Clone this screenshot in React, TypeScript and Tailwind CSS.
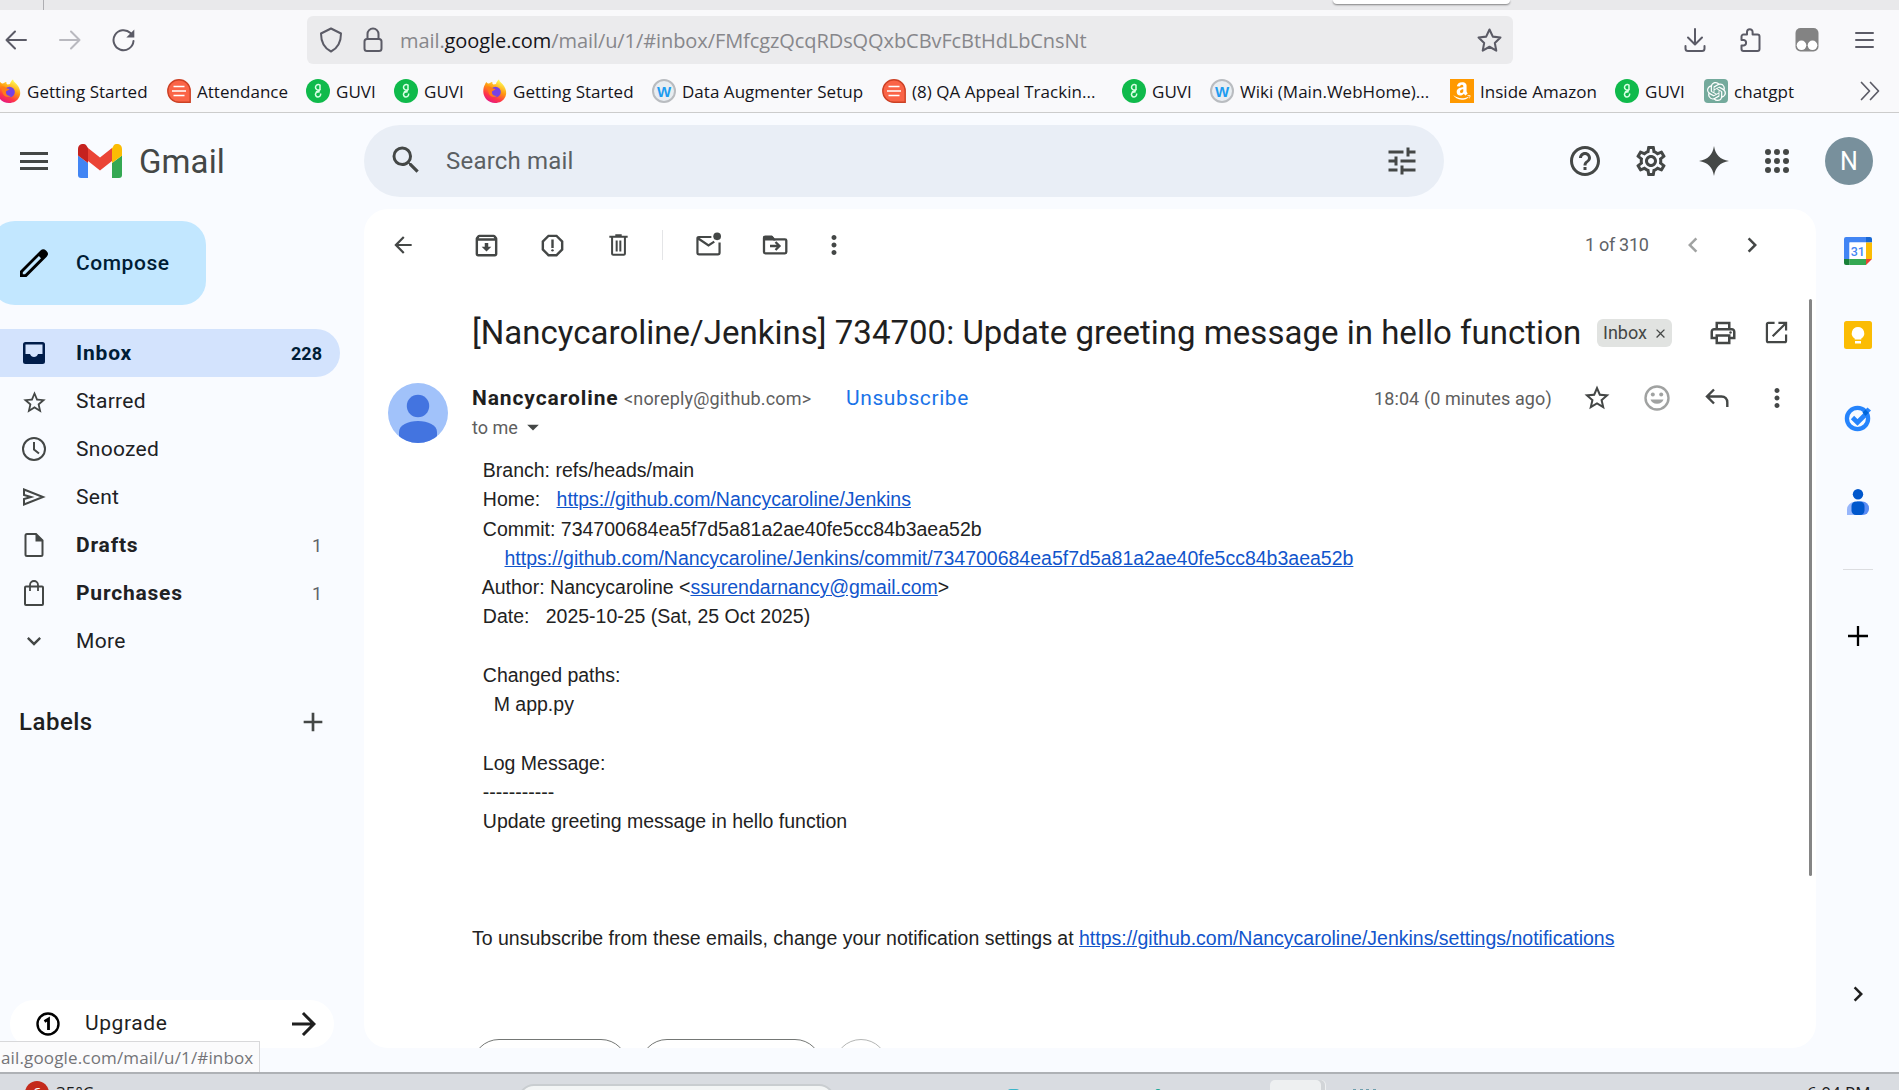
import React from "react";
import {
  MdArrowBack, MdArrowDropDown, MdArrowForward, MdChevronLeft, MdChevronRight, MdExpandMore,
  MdHelpOutline, MdMoreVert, MdOutlineArchive, MdOutlinePrint, MdOutlineSettings, MdSearch, MdStarOutline, MdTune,
  MdOutlineReport, MdAdd, MdClose,
} from "react-icons/md";
import { SiOpenai } from "react-icons/si";
import { FaAmazon } from "react-icons/fa";

const UI = "font-['Open_Sans','Noto_Sans',sans-serif]";

function Firefox() {
  return (
    <svg viewBox="0 0 24 24" className="size-6 shrink-0">
      <defs>
        <linearGradient id="fx" x1="0.8" y1="0" x2="0.3" y2="1">
          <stop offset="0.1" stopColor="#fff44f" />
          <stop offset="0.45" stopColor="#ff980e" />
          <stop offset="0.75" stopColor="#ff3647" />
          <stop offset="1" stopColor="#e31587" />
        </linearGradient>
      </defs>
      <path d="M2 5.500 C2.500 4 3.200 3.200 3.500 3 C4 4 5 4.500 6 4.600 C7 3.500 8.500 3 9.500 3 C9 4 9.500 5 10.500 5.500 L13 5 C13.500 3 14.500 1.500 16 0.500 C16.500 3 19 4 21 7 C23 10 24 14 22.500 17.500 C20.500 22 16.500 24 12 24 C5.500 24 0.500 19 0.300 12.800 C0.200 10 0.800 7.500 2 5.500Z" fill="url(#fx)" />
      <circle cx="12.500" cy="13" r="5.300" fill="#7542e5" />
      <path d="M4 8 C6 7 8 8 10 9.500 L12.500 10 C11.500 11.500 9.500 11.500 9 12.500 C8.500 15.500 11 17.500 14 16.800 C12 19 7.500 18 6 15Z" fill="#ff7a1a" />
    </svg>
  );
}

function RedDoc() {
  return (
    <svg viewBox="0 0 24 24" className="size-6 shrink-0">
      <path d="M12 .8A11.200 11.200 0 1 0 12 23.200H23.200V12A11.200 11.200 0 0 0 12 .8Z" fill="#fa6447" stroke="#cc4125" strokeWidth="1.400" />
      <path d="M6.500 7.500h11M5 12h14M6.500 16.500h11" stroke="#fff" strokeWidth="1.500" />
    </svg>
  );
}

function Guvi() {
  return (
    <svg viewBox="0 0 24 24" className="size-6 shrink-0">
      <circle cx="12" cy="12" r="12" fill="#0fba4b" />
      <path d="M14.500 6.500A2.800 2.800 0 1 0 14.500 10M14 6v4.500c0 2-4 1-4 3.500M14.500 14.500A2.600 2.600 0 1 1 9.700 14.300c.8-1.600 3-1 4-1.800" fill="none" stroke="#d8ffe4" strokeWidth="1.500" />
    </svg>
  );
}

function Wiki() {
  return (
    <span className="flex size-6 shrink-0 items-center justify-center rounded-full border-2 border-[#b9bcc0] bg-[#e8edf1] font-['Liberation_Sans',sans-serif] text-[15px] leading-none font-bold tracking-normal text-[#1c9cf0]">W</span>
  );
}

function Amazon() {
  return (
    <span className="flex size-6 shrink-0 items-center justify-center bg-[#ff9900]"><FaAmazon className="size-5 text-white" /></span>
  );
}

function ChatGpt() {
  return (
    <span className="flex size-6 shrink-0 items-center justify-center rounded-[4px] bg-[#74aa9c]"><SiOpenai className="size-[19px] text-white" /></span>
  );
}

const bookmarks: { icon: React.ReactNode; label: string; w: string }[] = [
  { icon: <Firefox />, label: "Getting Started", w: "w-[170px]" },
  { icon: <RedDoc />, label: "Attendance", w: "w-[139px]" },
  { icon: <Guvi />, label: "GUVI", w: "w-[88px]" },
  { icon: <Guvi />, label: "GUVI", w: "w-[89px]" },
  { icon: <Firefox />, label: "Getting Started", w: "w-[169px]" },
  { icon: <Wiki />, label: "Data Augmenter Setup", w: "w-[230px]" },
  { icon: <RedDoc />, label: "(8) QA Appeal Trackin...", w: "w-[240px]" },
  { icon: <Guvi />, label: "GUVI", w: "w-[88px]" },
  { icon: <Wiki />, label: "Wiki (Main.WebHome)...", w: "w-[240px]" },
  { icon: <Amazon />, label: "Inside Amazon", w: "w-[165px]" },
  { icon: <Guvi />, label: "GUVI", w: "w-[89px]" },
  { icon: <ChatGpt />, label: "chatgpt", w: "w-[156px]" },
];

function BrowserChrome() {
  const s = { fill: "none", stroke: "#5b5b66", strokeWidth: 2, strokeLinecap: "round", strokeLinejoin: "round" } as const;
  return (
    <header className={`${UI} h-[113px] shrink-0 border-b border-[#cccccc] bg-[#f9f9fb]`}>
      <div className="flex h-[10px] bg-[#e9e9eb]">
        <div className="w-[44px] border-r border-[#aeaeb2]" />
        <div className="ml-[1289px] h-[4px] w-[177px] rounded-b-[4px] bg-white shadow-[0_1px_2px_rgba(0,0,0,0.45)]" />
      </div>
      <div className="flex h-[60px] items-center">
        <svg viewBox="0 0 22 22" className="ml-[5px] size-[22px]"><path {...s} d="M21 11H1.500M10 2.500 1.500 11l8.500 8.500" /></svg>
        <svg viewBox="0 0 22 22" className="ml-[32px] size-[22px] opacity-40"><path {...s} d="M1 11h19.500M12 2.500l8.500 8.500-8.500 8.500" /></svg>
        <svg viewBox="0 0 24 24" className="ml-[31px] size-[24px]">
          <path {...s} d="M18.500 5A10 10 0 1 0 21.500 13" />
          <path d="M22.300 1.500v8h-8z" fill="#5b5b66" />
        </svg>
        <div className="ml-[171px] flex h-[48px] w-[1206px] items-center rounded-[6px] bg-[#ebebed]">
          <svg viewBox="0 0 24 26" className="ml-[12px] h-[26px] w-[24px]"><path {...s} d="M12 1.500 22 6.500C22 14 20 20.500 12 24.500 4 20.500 2 14 2 6.500Z" /></svg>
          <svg viewBox="0 0 20 26" className="ml-[20px] h-[26px] w-[20px]"><rect {...s} x="1.500" y="12" width="17" height="12" rx="2.500" /><path {...s} d="M4.500 12V7a5.500 5.500 0 0 1 11 0v5" /></svg>
          <div className="mt-[2px] ml-[17px] w-[1077px] shrink-0 text-[20px] tracking-[-0.08px] whitespace-nowrap text-[#87878b]">
            mail.<span className="text-[#15141a]">google.com</span>/mail/u/1/#inbox/FMfcgzQcqRDsQQxbCBvFcBtHdLbCnsNt
          </div>
          <svg viewBox="0 0 24 24" className="size-[25px] shrink-0"><path {...s} d="m12 1.500 3.200 6.800 7.300.9-5.400 5.100 1.400 7.400L12 18l-6.500 3.700 1.400-7.400L1.500 9.200l7.300-.9Z" /></svg>
        </div>
        <svg viewBox="0 0 22 24" className="ml-[171px] h-[24px] w-[22px]"><path {...s} d="M11 1v15M4 9.500l7 7 7-7M1.500 18v2.500A2.500 2.500 0 0 0 4 23h14a2.500 2.500 0 0 0 2.500-2.500V18" /></svg>
        <svg viewBox="0 0 22 24" className="ml-[33px] h-[24px] w-[22px]"><path {...s} d="M2.500 12V8.500A2 2 0 0 1 4.500 6.500H8V4a2.800 2.800 0 0 1 5.600 0v2.500h4.900a2 2 0 0 1 2 2V21a2 2 0 0 1-2 2h-14a2 2 0 0 1-2-2v-3.500h2.300a2.800 2.800 0 0 0 0-5.500Z" /></svg>
        <svg viewBox="0 0 24 24" className="ml-[34px] size-[24px]"><rect x=".5" y="0" width="23" height="23.500" rx="5" fill="#838383" /><circle cx="6.500" cy="17.300" r="4.800" fill="#fff" /><circle cx="17.500" cy="17.300" r="4.800" fill="#fff" /></svg>
        <svg viewBox="0 0 20 18" className="ml-[35px] h-[18px] w-[20px]"><path {...s} d="M2 2h17M2 9h17M2 16h17" /></svg>
      </div>
      <div className="flex h-[42px] items-center text-[17px] text-[#15141a]">
        <div className="ml-[-3px] flex shrink-0">
          {bookmarks.map((b, i) => (
            <div key={i} className={`flex shrink-0 items-center gap-[6px] whitespace-nowrap tracking-[0.03px] ${b.w}`}>
              {b.icon}
              <span className="pt-[2px]">{b.label}</span>
            </div>
          ))}
        </div>
        <svg viewBox="0 0 20 20" className="h-[20px] w-[20px]"><path {...s} strokeWidth={1.700} d="M1.500 1.500 9.500 10l-8 8.500M10.500 1.500l8 8.500-8 8.500" /></svg>
      </div>
    </header>
  );
}

function GmailLogo() {
  return (
    <svg viewBox="0 0 44 34" className="h-[34px] w-[44px]">
      <path d="M0 11.500 10 19v15H3a3 3 0 0 1-3-3Z" fill="#4285f4" />
      <path d="M44 11.500 34 19v15h7a3 3 0 0 0 3-3Z" fill="#34a853" />
      <path d="M34 4.500V16.500l10-5V5c0-4.500-4.800-6.500-8-4Z" fill="#fbbc04" />
      <path d="M34 4V19l10-7.500V5Z" fill="#fbbc04" />
      <path d="M10 17V4L22 13.500 34 4v13L22 26.500Z" fill="#ea4335" />
      <path d="M0 5v6.500L10 19V4L8 1C4.800-1.500 0 .5 0 5Z" fill="#c5221f" />
    </svg>
  );
}

function AppsGrid() {
  return (
    <svg viewBox="0 0 24 24" className="ml-[33px] size-[24px]">
      {[3, 12, 21].map((y) => [3, 12, 21].map((x) => <circle key={`${x}-${y}`} cx={x} cy={y} r="3" fill="#444746" />))}
    </svg>
  );
}

function Header() {
  return (
    <div className="flex h-[96px] shrink-0 items-center text-[#444746]">
      <div className="ml-[20px] flex h-[20px] w-[28px] flex-col justify-between py-[1px]">
        <i className="h-[3px] bg-[#444746]" /><i className="h-[3px] bg-[#444746]" /><i className="h-[3px] bg-[#444746]" />
      </div>
      <div className="ml-[30px]"><GmailLogo /></div>
      <div className="ml-[17px] w-[225px] pt-[2px] text-[33px] tracking-[0.1px]">Gmail</div>
      <div className="flex h-[72px] w-[1080px] items-center rounded-full bg-[#e9eef6]">
        <MdSearch className="mt-[-2px] ml-[24px] size-[36px]" />
        <div className="ml-[22px] w-[938px] text-[24px] tracking-[0.2px] text-[#5b5f63]">Search mail</div>
        <MdTune className="size-[36px]" />
      </div>
      <MdHelpOutline className="ml-[123px] size-[36px]" />
      <MdOutlineSettings className="ml-[30px] size-[36px]" />
      <svg viewBox="0 0 30 30" className="ml-[30px] size-[30px]"><path d="M15 0C16.500 9 21 13.500 30 15 21 16.500 16.500 21 15 30 13.500 21 9 16.500 0 15 9 13.500 13.500 9 15 0Z" fill="#444746" /></svg>
      <div className="ml-[3px]"><AppsGrid /></div>
      <div className="ml-[36px] flex size-[48px] items-center justify-center rounded-full bg-[#78909c] pt-[1px] text-[25px] text-white">N</div>
    </div>
  );
}

const g = { fill: "none", stroke: "#444746", strokeWidth: 2 } as const;

const nav: { label: string; icon: React.ReactNode; count?: string; bold?: boolean; active?: boolean }[] = [
  { label: "Inbox", count: "228", bold: true, active: true, icon: <svg viewBox="0 0 24 24" className="size-6"><path fillRule="evenodd" fill="#001d4a" d="M3.500 1h17A2.500 2.500 0 0 1 23 3.500v17a2.500 2.500 0 0 1-2.500 2.500h-17A2.500 2.500 0 0 1 1 20.500v-17A2.500 2.500 0 0 1 3.500 1Zm0 2.500V13H8c.7 2 2.200 3 4 3s3.300-1 4-3h4.500V3.500Z" /></svg> },
  { label: "Starred", icon: <MdStarOutline className="mt-[2px] size-[27px]" /> },
  { label: "Snoozed", icon: <svg viewBox="0 0 24 24" className="size-6"><circle {...g} cx="12" cy="12" r="11" /><path {...g} d="M12 5v7.500l5 4" /></svg> },
  { label: "Sent", icon: <svg viewBox="0 0 24 24" className="size-6"><path {...g} d="M2 4.500 21 12 2 19.500V14l7-2-7-2Z" /></svg> },
  { label: "Drafts", bold: true, count: "1", icon: <svg viewBox="0 0 24 24" className="size-6"><path {...g} d="M5 1h9l6.500 6.500V21.500A1.500 1.500 0 0 1 19 23H5a1.500 1.500 0 0 1-1.500-1.500v-19A1.500 1.500 0 0 1 5 1Z" /><path d="M13.500 1v7.500H21Z" fill="#444746" /></svg> },
  { label: "Purchases", bold: true, count: "1", icon: <svg viewBox="0 0 24 26" className="h-[26px] w-6"><rect {...g} x="3" y="6.500" width="18" height="18.500" rx="1" /><path {...g} strokeWidth={1.800} d="M8 11V5a4 4 0 0 1 8 0v6" /></svg> },
  { label: "More", icon: <MdExpandMore className="size-[28px]" /> },
];

function Sidebar() {
  return (
    <aside className="relative flex w-[364px] shrink-0 flex-col text-[21px] text-[#1f1f1f]">
      <div className="mt-[12px] ml-[-9px] flex h-[84px] w-[215px] shrink-0 items-center rounded-[24px] bg-[#c2e7ff] text-[#001d35]">
        <svg viewBox="0 0 28 28" className="ml-[29px] size-[28px]"><path fillRule="evenodd" fill="#000" d="M0 22 20.500 1.500a4 4 0 0 1 5.500 0l.7.700a4 4 0 0 1 0 5.500L6.500 28H0ZM2.800 23.200v2.100h2.200L21 9.200 18.900 7Z" /></svg>
        <span className="ml-[28px] pt-[1px] font-medium tracking-[0.55px]">Compose</span>
      </div>
      <nav className="mt-[24px]">
        {nav.map((n) => (
          <div key={n.label} className={`flex h-[48px] w-[340px] items-center pr-[18px] text-[#444746] ${n.active ? "rounded-r-full bg-[#d3e3fd]" : ""}`}>
            <span className="flex w-[68px] justify-center">{n.icon}</span>
            <span className={`ml-[8px] flex-1 pt-[1px] ${n.bold ? "font-bold tracking-[0.8px]" : "tracking-[0.3px]"} ${n.active ? "text-[#001d35]" : "text-[#202124]"}`}>{n.label}</span>
            {n.count && <span className={`text-[18px] ${n.active ? "font-bold text-[#001d35]" : "text-[#5f6368]"}`}>{n.count}</span>}
          </div>
        ))}
      </nav>
      <div className="mt-[27px] flex h-[60px] items-center">
        <span className="ml-[19px] w-[278px] text-[24px] font-medium tracking-[0.5px]">Labels</span>
        <MdAdd className="size-[32px] text-[#444746]" />
      </div>
      <div className="mt-[248px] ml-[10px] flex h-[48px] w-[324px] shrink-0 items-center rounded-full bg-white">
        <svg viewBox="0 0 24 24" className="ml-[26px] size-6"><circle cx="12" cy="12" r="10.500" fill="none" stroke="#000" strokeWidth="2.400" /><path d="M8.500 9.500 12.500 7v11" fill="none" stroke="#000" strokeWidth="2.800" /></svg>
        <span className="ml-[25px] w-[200px] tracking-[0.6px]">Upgrade</span>
        <MdArrowForward className="ml-[1px] size-[36px]" />
      </div>
      <div className={`${UI} absolute bottom-0 left-0 flex h-[31px] w-[260px] items-center border-t border-r border-[#d8d8da] bg-[#fbfbfc] pt-[1px] pl-[1px] text-[17px] tracking-[0.15px] whitespace-nowrap text-[#747478]`}>ail.google.com/mail/u/1/#inbox</div>
    </aside>
  );
}

function Link({ children }: { children: React.ReactNode }) {
  return <a className="text-[#1155cc] underline">{children}</a>;
}

function Message() {
  return (
    <main className="relative h-[839px] w-[1452px] shrink-0 overflow-hidden rounded-[24px] bg-white text-[#444746]">
      <div className="flex h-[72px] items-center">
        <MdArrowBack className="ml-[26px] size-[26px]" />
        <MdOutlineArchive className="ml-[56px] size-[29px]" />
        <MdOutlineReport className="ml-[37px] size-[29px]" />
        <svg viewBox="0 0 20 24" className="ml-[42px] h-[22px] w-[19px]"><path {...g} strokeWidth={2.200} d="M0 3h20M6.500 1.300h7M3 3v18.500c0 .8.400 1.200 1.200 1.200h11.600c.8 0 1.200-.4 1.200-1.200V3M8 7v12M12 7v12" /></svg>
        <div className="ml-[34px] h-[30px] w-px bg-[#e4e5e7]" />
        <svg viewBox="0 0 26 26" className="mt-[-2px] ml-[33px] size-[25px]"><path {...g} strokeWidth={2.300} d="M16 5.200H3c-1 0-1.500.5-1.500 1.500v15c0 1 .5 1.500 1.500 1.500h20c1 0 1.500-.5 1.500-1.500V11M2 6.500l11 7.500 6-4" /><circle cx="22" cy="4.500" r="4" fill="#444746" /></svg>
        <svg viewBox="0 0 26 20" className="ml-[41px] h-[20px] w-[26px]"><path {...g} strokeWidth={2.300} d="M2 5V3c0-.8.500-1.300 1.300-1.300H9.500L12 4.300h11c.8 0 1.300.5 1.300 1.300v11.500c0 .8-.5 1.300-1.300 1.300H3.300c-.8 0-1.300-.5-1.300-1.300ZM8 11h9M13.500 7l4 4-4 4" /><path d="M1.500 1h9l3 4.500h-12Z" fill="#444746" /></svg>
        <MdMoreVert className="ml-[31px] size-[30px]" />
        <span className="ml-[736px] w-[91px] pb-[2px] text-[18px] tracking-[-0.3px] whitespace-nowrap text-[#5f6368]">1 of 310</span>
        <MdChevronLeft className="ml-[2px] size-[30px] opacity-50" />
        <MdChevronRight className="ml-[29px] size-[30px]" />
      </div>
      <div className="flex h-[104px] items-center">
        <h2 className="ml-[108px] w-[1125px] text-[33px] tracking-[0.02px] whitespace-nowrap text-[#1f1f1f]">[Nancycaroline/Jenkins] 734700: Update greeting message in hello function</h2>
        <div className="mt-[-1px] flex h-[28px] w-[75px] items-center rounded-[6px] bg-[#e1e3e1] pl-[6px] text-[18px]"><span className="w-[50px] pb-[1px]">Inbox</span><MdClose className="mt-[2px] size-[15px]" /></div>
        <MdOutlinePrint className="mt-[-1px] ml-[36px] size-[30px]" />
        <svg viewBox="0 0 24 24" className="mt-[-2px] ml-[27px] size-[23px]"><path {...g} strokeWidth={2.300} d="M10 2H3.500C2.500 2 2 2.500 2 3.500v17c0 1 .5 1.500 1.500 1.500h17c1 0 1.500-.5 1.500-1.500V14M14 2h8v8M22 2 8 16" /></svg>
      </div>
      <div className="flex h-[70px]">
        <svg viewBox="0 0 60 60" className="mt-[-2px] ml-[24px] size-[60px]">
          <clipPath id="av"><circle cx="30" cy="30" r="30" /></clipPath>
          <g clipPath="url(#av)"><rect width="60" height="60" fill="#a1c2fa" /><circle cx="30" cy="23" r="11.200" fill="#4374e0" /><path d="M11 60V49c0-7 9-11 19-11s19 4 19 11v11Z" fill="#4374e0" /></g>
        </svg>
        <div className="mt-[-1px] ml-[24px]">
          <div className="flex h-[28px] items-center whitespace-nowrap">
            <span className="w-[152px] pt-[1px] text-[21px] font-bold tracking-[0.9px] text-[#1f1f1f]">Nancycaroline</span>
            <span className="w-[222px] text-[18px] tracking-[0.17px] text-[#5e5e5e]">&lt;noreply@github.com&gt;</span>
            <span className="w-[528px] pt-[1px] text-[21px] tracking-[0.6px] text-[#1a73e8]">Unsubscribe</span>
            <span className="w-[208px] text-[18px] tracking-[0.1px] text-[#5e5e5e]">18:04 (0 minutes ago)</span>
            <MdStarOutline className="size-[30px]" />
            <svg viewBox="0 0 26 26" className="ml-[32px] size-[26px] opacity-50"><circle {...g} strokeWidth={2.400} cx="13" cy="13" r="11.500" /><circle cx="8.800" cy="9.500" r="2" fill="#444746" /><circle cx="17.200" cy="9.500" r="2" fill="#444746" /><path d="M6.500 14.500h13a6.700 5.500 0 0 1-13 0Z" fill="#444746" /></svg>
            <svg viewBox="0 0 24 20" className="ml-[35px] h-[20px] w-[24px]"><path {...g} strokeWidth={2.400} d="M9 1.500 2 8.500l7 7M2 8.500h14.500c3.500 0 5.800 2.500 5.800 6V19" /></svg>
            <MdMoreVert className="ml-[33px] size-[30px]" />
          </div>
          <div className="flex h-[30px] items-center text-[18px] text-[#5e5e5e]"><span className="w-[47px]">to me</span><MdArrowDropDown className="size-[28px] text-[#444746]" /></div>
        </div>
      </div>
      <pre className="mt-[1px] ml-[108px] font-['Liberation_Sans',Arial,sans-serif] text-[19.5px] leading-[29.25px] text-[#222222]">
        {"  Branch: refs/heads/main\n  Home:   "}<Link>https://github.com/Nancycaroline/Jenkins</Link>
        {"\n  Commit: 734700684ea5f7d5a81a2ae40fe5cc84b3aea52b\n      "}<Link>https://github.com/Nancycaroline/Jenkins/commit/734700684ea5f7d5a81a2ae40fe5cc84b3aea52b</Link>
        {"\n  Author: Nancycaroline <"}<Link>ssurendarnancy@gmail.com</Link>{">\n  Date:   2025-10-25 (Sat, 25 Oct 2025)\n\n  Changed paths:\n    M app.py\n\n  Log Message:\n  -----------\n  Update greeting message in hello function\n\n\n\nTo unsubscribe from these emails, change your notification settings at "}
        <Link>https://github.com/Nancycaroline/Jenkins/settings/notifications</Link>
      </pre>
      <div className="mt-[86px] ml-[108px] flex">
        <div className="h-[54px] w-[156px] shrink-0 rounded-full border border-[#747775]" />
        <div className="ml-[12px] h-[54px] w-[182px] shrink-0 rounded-full border border-[#747775]" />
        <div className="ml-[12px] size-[54px] shrink-0 rounded-full border border-[#b4b6b5]" />
      </div>
      <div className="absolute top-[90px] left-[1445px] h-[577px] w-[3px] rounded-full bg-[#858585]" />
    </main>
  );
}

function SidePanel() {
  return (
    <aside className="flex flex-1 flex-col items-center">
      <svg viewBox="0 0 28 28" className="mt-[28px] size-[28px]">
        <path d="M2 0h20v5.500H5.500V22H0V2a2 2 0 0 1 2-2Z" fill="#4285f4" /><path d="M22 0h4a2 2 0 0 1 2 2v3.500h-6Z" fill="#1967d2" />
        <path d="M22 5.500h6V22h-6Z" fill="#fbbc04" /><path d="M5.500 22H22v6H5.500Z" fill="#34a853" /><path d="M0 22h5.500v6H2a2 2 0 0 1-2-2Z" fill="#188038" /><path d="M22 22h6l-6 6Z" fill="#ea4335" />
        <path d="M5.500 5.500H22V22H5.500Z" fill="#fff" />
        <text x="13.800" y="18.500" textAnchor="middle" fontFamily="Roboto" fontSize="12.500" fontWeight="500" fill="#4285f4">31</text>
      </svg>
      <svg viewBox="0 0 28 28" className="mt-[56px] size-[28px]"><rect width="28" height="28" rx="2.500" fill="#fbbc04" /><path d="M14 6a6.300 6.300 0 0 0-3.300 11.600V18.500h6.600v-.9A6.300 6.300 0 0 0 14 6ZM11 20h6v2.500h-6Z" fill="#fff" /></svg>
      <svg viewBox="0 0 28 28" className="mt-[55px] size-[28px]"><circle cx="13.500" cy="14.500" r="10.600" fill="none" stroke="#2684fc" strokeWidth="4.300" /><path d="m8.500 13.500 5 5 8-8" fill="none" stroke="#2684fc" strokeWidth="4.600" /><path d="m19 8 4.500-4.500 3.500 3-4.800 4.800Z" fill="#2684fc" /><path d="m18.500 8.500 3-3 3.200 3.200-3.200 3.200Z" fill="#0066da" /></svg>
      <svg viewBox="0 0 22 26" className="mt-[57px] h-[26px] w-[22px]"><path d="M0 26v-5.500A7.500 7.500 0 0 1 7.500 13H10v13Z" fill="#97b6fb" /><path d="M10 12.500h5.500a6.500 6.500 0 0 1 6.500 6.500v1a6 6 0 0 1-6 6h-6Z" fill="#5b8df5" /><rect x="4.500" y="12.500" width="13" height="13.500" rx="4.500" fill="#0057cc" /><circle cx="11" cy="5.300" r="5.200" fill="#0057cc" /></svg>
      <div className="mt-[54px] h-px w-[30px] bg-[#dcdde0]" />
      <svg viewBox="0 0 20 20" className="mt-[56px] size-[20px]"><path d="M10 0v20M0 10h20" stroke="#000" strokeWidth="2.300" /></svg>
      <MdChevronRight className="mt-[333px] size-[30px] text-[#1f1f1f]" />
    </aside>
  );
}

function Taskbar() {
  return (
    <footer className={`${UI} flex h-[18px] shrink-0 items-start overflow-hidden border-t-2 border-[#aeb1b5] bg-[#d9dce1] text-[17px] leading-[20px] whitespace-nowrap text-[#1b1b1b]`}>
      <div className="mt-[7px] ml-[25px] flex size-[24px] shrink-0 justify-center rounded-full bg-[#c42b1c] pt-[3px] text-[15px] leading-[16px] text-white">6</div>
      <div className="mt-[9px] ml-[7px] w-[462px] shrink-0">35°C</div>
      <div className="mt-[10px] h-[40px] w-[317px] shrink-0 rounded-[16px] border-2 border-[#c9cdd0] bg-[#f3f5f5]" />
      <div className="mt-[15px] ml-[172px] h-[4px] w-[13px] shrink-0 rounded-t-full bg-[#39b5c9]" />
      <div className="mt-[15px] ml-[135px] h-[4px] w-[6px] shrink-0 rounded-t-full bg-[#12a594]" />
      <div className="mt-[6px] ml-[109px] h-[40px] w-[51px] shrink-0 rounded-[5px] bg-[#eef0f1] shadow-[4px_0_0_#d2d5d8,5px_0_0_#eef0f1]" />
      <div className="mt-[15px] ml-[32px] flex w-[23px] shrink-0 justify-between"><i className="h-[2px] w-[3px] bg-[#6fa0ae]" /><i className="h-[2px] w-[3px] bg-[#6fa0ae]" /><i className="h-[2px] w-[3px] bg-[#6fa0ae]" /><i className="h-[2px] w-[3px] bg-[#6fa0ae]" /></div>
      <div className="mt-[9px] ml-[431px] shrink-0">6:04 PM</div>
    </footer>
  );
}

export default function App() {
  return (
    <div className="flex h-[1090px] w-[1899px] flex-col overflow-hidden bg-[#f9fbff] font-['Roboto',sans-serif]">
      <BrowserChrome />
      <Header />
      <div className="flex h-[863px] shrink-0">
        <Sidebar />
        <Message />
        <SidePanel />
      </div>
      <Taskbar />
    </div>
  );
}
